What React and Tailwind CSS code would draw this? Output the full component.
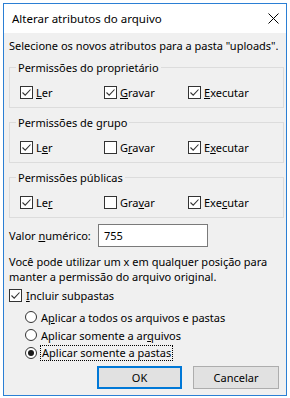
import React from 'react';

function Check({ checked }) {
  return (
    <span className="w-[13px] h-[13px] border border-[#333333] bg-white flex items-center justify-center shrink-0">
      {checked && (
        <svg width="11" height="11" viewBox="0 0 11 11">
          <path d="M1.5 5.5 L4.2 8.2 L9.5 2.5" fill="none" stroke="#333333" strokeWidth="1.1" />
        </svg>
      )}
    </span>
  );
}

function Radio({ checked }) {
  return (
    <span className="w-[12px] h-[12px] rounded-full border border-[#333333] bg-white flex items-center justify-center shrink-0">
      {checked && <span className="w-[6px] h-[6px] rounded-full bg-[#1a1a1a]" />}
    </span>
  );
}

function Group({ title, items }) {
  return (
    <fieldset className="border border-[#dcdcdc] h-[48px] pl-[10px] mt-[7px]">
      <legend className="-ml-[4px] px-[2px] leading-[15px]">{title}</legend>
      <div className="flex mt-[10px]">
        {items.map((it, i) => (
          <div key={i} className="w-[84px] flex items-center gap-[3px] h-[15px]">
            <Check checked={it.checked} />
            <span>{it.label}</span>
          </div>
        ))}
      </div>
    </fieldset>
  );
}

export default function App() {
  return (
    <div className="w-[290px] h-[398px] bg-white pt-[3px] pl-[3px] overflow-hidden text-[11px] leading-[15px] text-black whitespace-nowrap" style={{ fontFamily: '"Noto Sans", sans-serif' }}>
      <div className="w-[284px] h-[393px] border border-[#2b7fd4] flex flex-col">
        {/* barra de título */}
        <div className="h-[29px] bg-white flex items-center justify-between pl-[8px] pr-[7px] shrink-0">
          <span className="text-[11.5px]">Alterar atributos do arquivo</span>
          <svg width="11" height="11" viewBox="0 0 11 11">
            <path d="M0.5 0.5 L10.5 10.5 M10.5 0.5 L0.5 10.5" stroke="#000" strokeWidth="1" />
          </svg>
        </div>

        <div className="flex-1 bg-[#f0f0f0] pl-[5px] pr-[2px] pt-[5px]">
          <p>Selecione os novos atributos para a pasta "uploads".</p>

          <Group
            title="Permissões do proprietário"
            items={[
              { checked: true, label: <><u>L</u>er</> },
              { checked: true, label: <><u>G</u>ravar</> },
              { checked: true, label: <><u>E</u>xecutar</> },
            ]}
          />
          <Group
            title="Permissões de grupo"
            items={[
              { checked: true, label: <>L<u>e</u>r</> },
              { checked: false, label: <>G<u>r</u>avar</> },
              { checked: true, label: <>E<u>x</u>ecutar</> },
            ]}
          />
          <Group
            title="Permissões públicas"
            items={[
              { checked: true, label: <>Le<u>r</u></> },
              { checked: false, label: <>Gra<u>v</u>ar</> },
              { checked: true, label: <>Exe<u>c</u>utar</> },
            ]}
          />

          <div className="flex items-center mt-[6px]">
            <span className="w-[89px]">Valor <u>n</u>umérico:</span>
            <div className="w-[110px] h-[23px] border border-[#7a7a7a] bg-white flex items-center pl-[5px]">755</div>
          </div>

          <p className="mt-[7px]">
            Você pode utilizar um x em qualquer posição para
            <br />
            manter a permissão do arquivo original.
          </p>

          <div className="flex items-center gap-[4px] h-[15px] mt-[4px]">
            <Check checked={true} />
            <span><u>I</u>ncluir subpastas</span>
          </div>

          <div className="pl-[16px] mt-[5px] flex flex-col">
            <div className="flex items-center gap-[3px] h-[18px]">
              <Radio checked={false} />
              <span className="px-[1px]">A<u>p</u>licar a todos os arquivos e pastas</span>
            </div>
            <div className="flex items-center gap-[3px] h-[18px]">
              <Radio checked={false} />
              <span className="px-[1px]">Aplicar somente a ar<u>q</u>uivos</span>
            </div>
            <div className="flex items-center gap-[3px] h-[18px]">
              <Radio checked={true} />
              <span className="px-[1px] border border-dotted border-black leading-[14px]">Aplicar somente a pastas</span>
            </div>
          </div>

          <div className="flex justify-end gap-[11px] mr-[5px] mt-[4px]">
            <button className="w-[85px] h-[23px] border-2 border-[#0078d7] bg-[#e1e1e1] flex items-center justify-center">OK</button>
            <button className="w-[86px] h-[23px] border border-[#adadad] bg-[#e1e1e1] flex items-center justify-center">Cancelar</button>
          </div>
        </div>
      </div>
    </div>
  );
}
